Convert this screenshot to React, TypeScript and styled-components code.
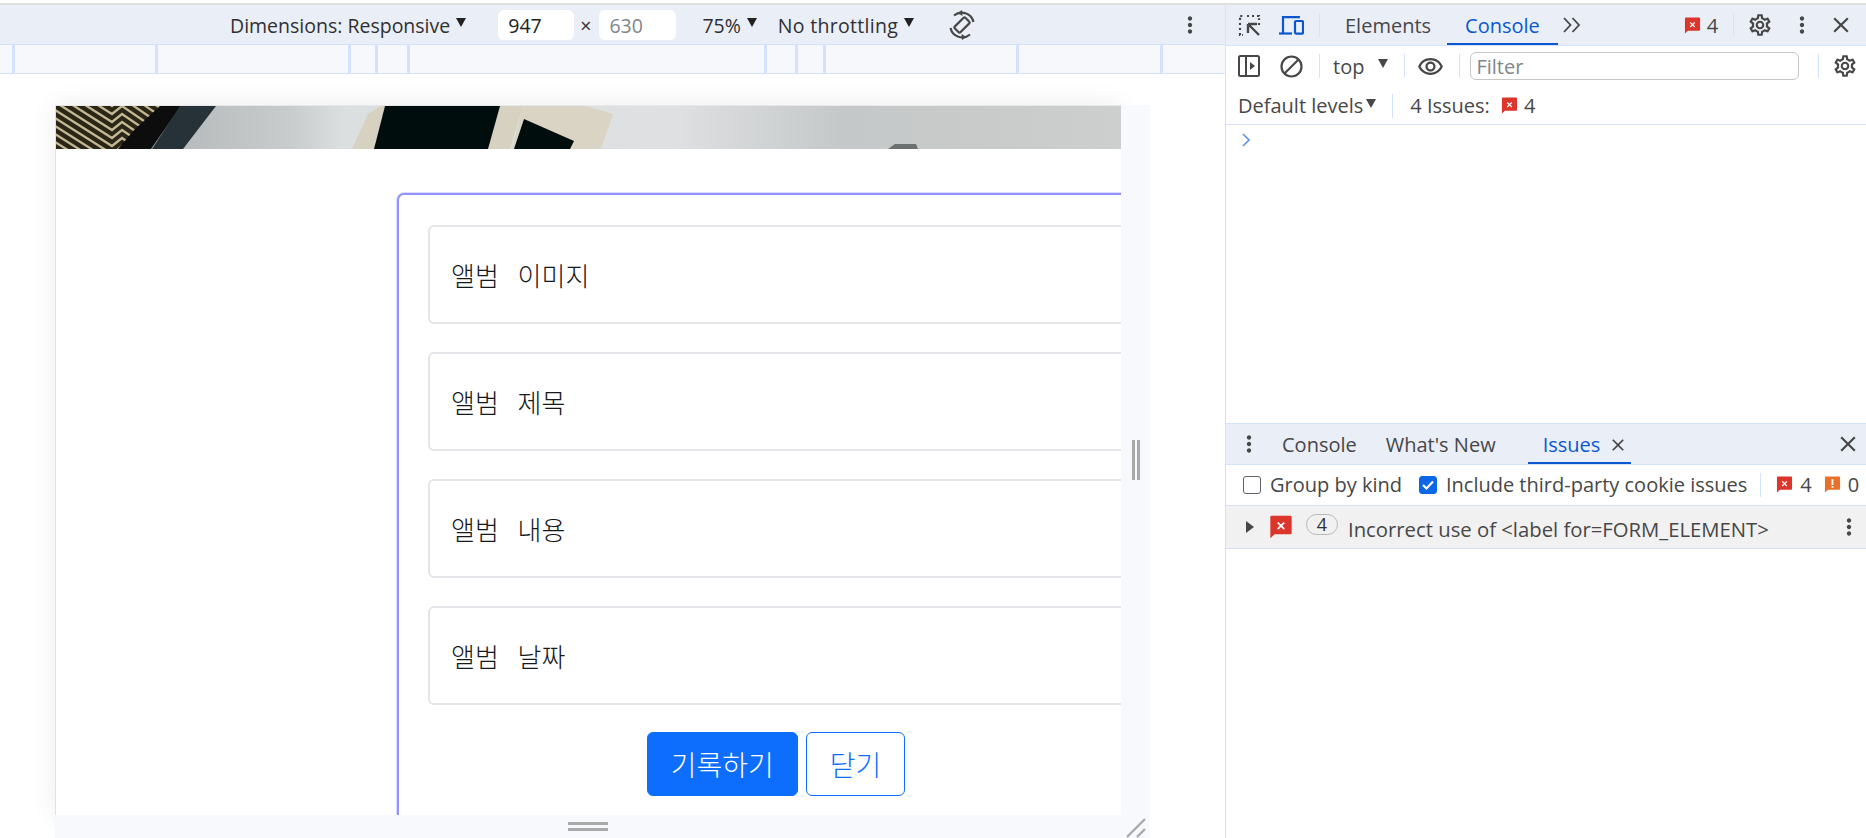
import React from "react";
import styled, { createGlobalStyle } from "styled-components";
import { MdClose, MdMoreVert, MdOutlineRemoveRedEye, MdOutlineSettings } from "react-icons/md";

const Global = createGlobalStyle`
  html, body { margin: 0; padding: 0; width: 1866px; height: 838px; overflow: hidden; background: #fff; }
  body { font-family: "Open Sans", "Noto Sans", sans-serif; color: #474747; }
  * { box-sizing: border-box; }
`;

const Shell = styled.div`width: 1866px; height: 838px; display: flex; flex-direction: column;`;
const TopEdge = styled.div`height: 5px; flex: none; border-bottom: 2px solid #dfdfdf;`;
const Main = styled.div`flex: 1; display: flex; min-height: 0;`;

const Emulator = styled.div`width: 1225px; flex: none; display: flex; flex-direction: column;`;
const DeviceBar = styled.div`height: 40px; flex: none; background: #eaeef7; border-bottom: 1px solid #d3e3fd; display: flex; align-items: center; padding-top: 1px; font-size: 19.5px; color: #303030;`;
const BarText = styled.span<{ $ml: number; $size?: number; $track?: number; $drop?: number }>`
  margin-left: ${p => p.$ml}px; white-space: nowrap; letter-spacing: ${p => p.$track ?? 0}px; margin-top: ${p => p.$drop ?? 0}px;
  ${p => (p.$size ? `font-size: ${p.$size}px;` : "")}
`;
const Caret = styled.i<{ $ml?: number; $color?: string }>`
  flex: none; width: 0; height: 0; margin-left: ${p => p.$ml ?? 6}px; margin-top: -5px;
  border-left: 5.5px solid transparent; border-right: 5.5px solid transparent;
  border-top: 9px solid ${p => p.$color ?? "#222"};
`;
const SizeBox = styled.span<{ $ml: number; $muted?: boolean; $w: number }>`
  flex: none; margin-left: ${p => p.$ml}px; width: ${p => p.$w}px; height: 30px; border-radius: 6px; background: #fff;
  display: flex; align-items: center; padding-left: 10px; color: ${p => (p.$muted ? "#80868b" : "#202124")};
`;
const IconSlot = styled.span<{ $ml?: number; $size?: number; $color?: string }>`
  flex: none; display: inline-flex; margin-left: ${p => p.$ml ?? 0}px; color: ${p => p.$color ?? "#474747"};
  font-size: ${p => p.$size ?? 24}px; line-height: 0;
`;

const Ruler = styled.div`height: 29px; flex: none; background: #f6f8fc; border-bottom: 1px solid #d3e3fd; display: flex;`;
const RulerMark = styled.div<{ $w: number }>`width: ${p => p.$w}px; flex: none; height: 28px; border-right: 3px solid #d3e3fd;`;

const Viewport = styled.div`flex: 1; min-height: 0; padding: 31px 0 0 55px; background: #fff; overflow: hidden;`;
const Frame = styled.div`display: grid; grid-template-columns: 1066px 29px; grid-template-rows: 710px 23px; width: 1095px;`;
const Page = styled.div`
  background: #fff; overflow: hidden; border-left: 1px solid #e2e2e2; border-top: 1px solid #e8e8e8;
  box-shadow: 0 0 24px rgba(0, 0, 0, 0.08);
`;
const Banner = styled.svg`display: block; width: 1066px; height: 43px;`;
const Card = styled.div`
  width: 756px; height: 660px; margin: 44px 0 0 341px; padding: 30px 29px 0;
  border: 2px solid #9393ff; border-radius: 7px; background: #fff; display: flex; flex-direction: column; gap: 28px;
  box-shadow: 0 -1px 0 #dcdcff, -1px 0 0 #dcdcff;
`;
const Field = styled.div`
  height: 99px; border: 2px solid #e3e5e8; border-radius: 6px; display: flex; align-items: center; padding: 0 21px;
  margin-right: -10px; font-family: "Noto Sans CJK KR", sans-serif; font-size: 26px; font-weight: 300; word-spacing: 13px; color: #16191c; background: #fff; flex: none;
`;
const Actions = styled.div`display: flex; justify-content: center; gap: 8px; margin-top: -1px; padding-left: 2px;`;
const Action = styled.button<{ $solid?: boolean }>`
  height: 64px; padding: 0 23px; border-radius: 6px; border: 1px solid #0d6efd; font-family: "Noto Sans CJK KR", sans-serif; font-size: 28px; font-weight: 300;
  background: ${p => (p.$solid ? "#0d6efd" : "#fff")}; color: ${p => (p.$solid ? "#fff" : "#0d6efd")};
`;
const SideGutter = styled.div`background: #f8f9fd; display: flex; align-items: center; justify-content: center; gap: 2px;`;
const VBar = styled.span`width: 3px; height: 40px; background: #a9a9a9;`;
const BottomGutter = styled.div`background: #f8f9fd; display: flex; flex-direction: column; align-items: center; justify-content: center; gap: 3px;`;
const HBar = styled.span`width: 40px; height: 3px; background: #a9a9a9;`;
const CornerGutter = styled.div`background: #f8f9fd; display: flex; align-items: flex-end; justify-content: flex-end; padding: 0 4px 0 0;`;

const Tools = styled.div`flex: 1; min-width: 0; border-left: 1px solid #d3e3fd; display: flex; flex-direction: column; font-size: 20px; color: #474747;`;
const TabBar = styled.div`height: 41px; flex: none; background: #eaeef7; border-bottom: 1px solid #d3e3fd; display: flex; align-items: center;`;
const Tab = styled.span<{ $ml: number; $on?: boolean; $pad?: number; $padR?: number }>`
  margin-left: ${p => p.$ml}px; white-space: nowrap; height: 100%; display: flex; align-items: center;
  padding: 1px ${p => p.$padR ?? p.$pad ?? 0}px 0 ${p => p.$pad ?? 0}px;
  color: ${p => (p.$on ? "#0b57d0" : "#474747")}; box-shadow: ${p => (p.$on ? "inset 0 -2px 0 #0b57d0" : "none")};
`;
const Sep = styled.span<{ $ml: number; $h?: number }>`flex: none; width: 1px; height: ${p => p.$h ?? 24}px; margin-left: ${p => p.$ml}px; background: #d3e3fd;`;
const ToolRow = styled.div<{ $h: number; $line?: boolean; $lift?: number }>`
  height: ${p => p.$h}px; flex: none; display: flex; align-items: center; padding-bottom: ${p => p.$lift ?? 0}px;
  ${p => (p.$line ? "border-bottom: 1px solid #d3e3fd;" : "")}
`;
const Filter = styled.span`
  flex: none; margin-left: 10px; width: 329px; height: 28px; border: 1px solid #c4c7c5; border-radius: 6px;
  display: flex; align-items: center; padding-left: 5px; color: #80868b;
`;
const Prompt = styled.div`height: 299px; flex: none; padding: 7px 0 0 15px; border-bottom: 1px solid #d3e3fd; line-height: 0;`;
const Issue = styled.div`height: 44px; flex: none; display: flex; align-items: center; background: #f1f1f1; border-top: 1px solid #d3e3fd; border-bottom: 1px solid #d3e3fd;`;
const CountBadge = styled.span`
  flex: none; margin-left: 13px; width: 32px; height: 21px; border: 1px solid #b8b8b8; border-radius: 11px; margin-top: -6px;
  display: flex; align-items: center; justify-content: center; font-size: 18px; color: #333;
`;
const Box = styled.span<{ $ml: number; $on?: boolean }>`
  flex: none; width: 18px; height: 18px; margin-left: ${p => p.$ml}px; border-radius: 3px; border: 1px solid #5f6368; display: flex; align-items: center; justify-content: center;
  ${p => (p.$on ? "background: #0b67e6; border-color: #0b67e6;" : "background: #fff;")}
`;
const RightArrow = styled.i<{ $ml: number }>`
  flex: none; width: 0; height: 0; margin-left: ${p => p.$ml}px;
  border-top: 6px solid transparent; border-bottom: 6px solid transparent; border-left: 8px solid #474747;
`;

function Flag({ w = 17, warn = false, ml = 0 }: { w?: number; warn?: boolean; ml?: number }) {
  const fill = warn ? "#e8702a" : "#dc352b";
  return (
    <IconSlot $ml={ml}>
      <svg width={w} height={w} viewBox="0 0 18 18">
        <path d="M1 1.5a1 1 0 0 1 1-1h14a1 1 0 0 1 1 1v12a1 1 0 0 1-1 1H4.2L1 17.5z" fill={fill} />
        {warn ? (
          <path d="M8 3.5h2v6H8zM8 10.5h2v2H8z" fill="#fff" />
        ) : (
          <path d="M7 5.2l2 2 2-2 .9.9-2 2 2 2-.9.9-2-2-2 2-.9-.9 2-2-2-2z" fill="#fff" />
        )}
      </svg>
    </IconSlot>
  );
}

function Rotate() {
  return (
    <svg width="26" height="30" viewBox="0 0 26 30" fill="none" stroke="#474747" strokeWidth="2.2">
      <rect x="9" y="7.5" width="8" height="15" rx="1.2" transform="rotate(45 13 15)" />
      <path d="M5 5.5A12 12 0 0 1 24.5 12" />
      <path d="M1.5 18A12 12 0 0 0 21 24.5" />
      <path d="M13 0l-4.5 3L13.5 6zM13 30l4.5-3L12.5 24z" fill="#474747" strokeWidth="0" />
    </svg>
  );
}
function Inspect() {
  return (
    <svg width="23" height="23" viewBox="0 0 23 23" fill="none" stroke="#474747">
      <path d="M2 6V2h4M9 2h2M14 2h2M19 2h2v4M21 9v2M2 9v2M2 14v2M2 19v2h3" strokeWidth="2.2" strokeDasharray="2.2 2" />
      <path d="M10 10v9M10 10h9M10 10l11 11" strokeWidth="2.4" />
    </svg>
  );
}
function Device() {
  return (
    <svg width="25" height="22" viewBox="0 0 25 22" fill="none" stroke="#0b57d0" strokeWidth="2.2">
      <path d="M4 19V3.2h17" />
      <path d="M0 19.5h13" />
      <rect x="16" y="7" width="8" height="12.6" rx="1" />
    </svg>
  );
}
function Sidebar() {
  return (
    <svg width="22" height="22" viewBox="0 0 22 22" fill="none" stroke="#474747" strokeWidth="2">
      <rect x="1" y="1" width="20" height="20" rx="1.5" />
      <path d="M8 1v20" />
      <path d="M12 7l5 4-5 4z" fill="#474747" strokeWidth="0" />
    </svg>
  );
}
function Block() {
  return (
    <svg width="23" height="23" viewBox="0 0 23 23" fill="none" stroke="#474747" strokeWidth="2.2">
      <circle cx="11.5" cy="11.5" r="10" />
      <path d="M4.5 18.5l14-14" />
    </svg>
  );
}
function ChevronPrompt() {
  return (
    <svg width="10" height="16" viewBox="0 0 10 16" fill="none" stroke="#5b8def" strokeWidth="1.6">
      <path d="M2 2l6 6-6 6" />
    </svg>
  );
}
function DoubleChevron() {
  return (
    <svg width="18" height="16" viewBox="0 0 18 16" fill="none" stroke="#474747" strokeWidth="1.8">
      <path d="M1 1l6.5 7L1 15M9.5 1L16 8l-6.5 7" />
    </svg>
  );
}
function Corner() {
  return (
    <svg width="20" height="20" viewBox="0 0 20 20" fill="none" stroke="#a9a9a9" strokeWidth="2.4">
      <path d="M1 19L19 1M11 19l8-8" />
    </svg>
  );
}

function Photo() {
  const stripes = Array.from({ length: 16 }, (_, i) => i * 8 - 70);
  return (
    <Banner viewBox="0 0 1066 43" preserveAspectRatio="none">
      <defs>
        <linearGradient id="wall" x1="0" x2="1" y1="0" y2="0">
          <stop offset="0.1" stopColor="#b4b8b9" />
          <stop offset="0.22" stopColor="#c9cccd" />
          <stop offset="0.27" stopColor="#dcdfe0" />
          <stop offset="0.58" stopColor="#dee0e1" />
          <stop offset="0.74" stopColor="#c5c8c8" />
          <stop offset="1" stopColor="#cdcece" />
        </linearGradient>
        <filter id="soft" x="-5%" y="-5%" width="110%" height="110%">
          <feGaussianBlur stdDeviation="0.7" />
        </filter>
        <clipPath id="folds">
          <polygon points="0,0 104,0 78,24 62,43 0,43" />
        </clipPath>
      </defs>
      <rect width="1066" height="43" fill="url(#wall)" />
      <g filter="url(#soft)">
        <polygon points="0,0 125,0 95,43 0,43" fill="#0a1011" />
        <g clipPath="url(#folds)">
          <rect width="120" height="43" fill="#2a2618" />
          {stripes.map(y => (
            <path key={y} d={`M-4 ${y}L56 ${y + 38}L66 ${y + 30}L110 ${y + 60}`} fill="none" stroke="#c4b894" strokeWidth="2.3" />
          ))}
        </g>
        <polygon points="124,0 160,0 127,43 96,43" fill="#283238" />
        <polygon points="312,8 325,0 467,0 454,43 296,43" fill="#d6d1c0" />
        <polygon points="329,0 444,0 432,43 318,43" fill="#050c10" />
        <polygon points="467,0 530,0 557,8 545,43 456,43" fill="#d9d4c4" />
        <polygon points="468,13 518,35 514,43 458,43" fill="#050b10" />
        <polygon points="839,38 860,38 862,43 832,43" fill="#6c6f70" />
      </g>
    </Banner>
  );
}

export default function App() {
  const marks = [15, 143, 193, 27, 32, 357, 31, 28, 193, 144];
  return (
    <Shell>
      <Global />
      <TopEdge />
      <Main>
        <Emulator>
          <DeviceBar>
            <BarText $ml={230}>Dimensions: Responsive</BarText>
            <Caret />
            <SizeBox $ml={32} $w={76}>947</SizeBox>
            <BarText $ml={6}>×</BarText>
            <SizeBox $ml={8} $muted $w={77}>630</SizeBox>
            <BarText $ml={26}>75%</BarText>
            <Caret />
            <BarText $ml={21} $track={0.3}>No throttling</BarText>
            <Caret />
            <IconSlot $ml={35}><Rotate /></IconSlot>
            <IconSlot $ml={202} $size={26}><MdMoreVert /></IconSlot>
          </DeviceBar>
          <Ruler>{marks.map((w, i) => <RulerMark key={i} $w={w} />)}</Ruler>
          <Viewport>
            <Frame>
              <Page>
                <Photo />
                <Card>
                  <Field>앨범 이미지</Field>
                  <Field>앨범 제목</Field>
                  <Field>앨범 내용</Field>
                  <Field>앨범 날짜</Field>
                  <Actions>
                    <Action $solid>기록하기</Action>
                    <Action>닫기</Action>
                  </Actions>
                </Card>
              </Page>
              <SideGutter><VBar /><VBar /></SideGutter>
              <BottomGutter><HBar /><HBar /></BottomGutter>
              <CornerGutter><Corner /></CornerGutter>
            </Frame>
          </Viewport>
        </Emulator>
        <Tools>
          <TabBar>
            <IconSlot $ml={12}><Inspect /></IconSlot>
            <IconSlot $ml={18}><Device /></IconSlot>
            <Sep $ml={15} />
            <Tab $ml={25}>Elements</Tab>
            <Tab $ml={16} $on $pad={18}>Console</Tab>
            <IconSlot $ml={5}><DoubleChevron /></IconSlot>
            <Flag ml={103} />
            <BarText $ml={6}>4</BarText>
            <Sep $ml={15} />
            <IconSlot $ml={13} $size={26}><MdOutlineSettings /></IconSlot>
            <IconSlot $ml={16} $size={26}><MdMoreVert /></IconSlot>
            <IconSlot $ml={13} $size={26}><MdClose /></IconSlot>
          </TabBar>
          <ToolRow $h={42} $lift={2}>
            <IconSlot $ml={12}><Sidebar /></IconSlot>
            <IconSlot $ml={20}><Block /></IconSlot>
            <Sep $ml={16} />
            <BarText $ml={13}>top</BarText>
            <Caret $ml={14} $color="#474747" />
            <Sep $ml={16} />
            <IconSlot $ml={12} $size={27}><MdOutlineRemoveRedEye /></IconSlot>
            <Sep $ml={15} />
            <Filter>Filter</Filter>
            <Sep $ml={19} />
            <IconSlot $ml={13} $size={26}><MdOutlineSettings /></IconSlot>
          </ToolRow>
          <ToolRow $h={37} $line $lift={1}>
            <BarText $ml={12}>Default levels</BarText>
            <Caret $ml={3} $color="#474747" />
            <Sep $ml={16} />
            <BarText $ml={17}>4 Issues:</BarText>
            <Flag ml={11} />
            <BarText $ml={6}>4</BarText>
          </ToolRow>
          <Prompt><ChevronPrompt /></Prompt>
          <TabBar>
            <IconSlot $ml={10} $size={26}><MdMoreVert /></IconSlot>
            <Tab $ml={20}>Console</Tab>
            <Tab $ml={29}>What's New</Tab>
            <Tab $ml={32} $on $pad={15} $padR={3}>Issues<IconSlot $ml={8} $size={20}><MdClose /></IconSlot></Tab>
            <IconSlot $ml={204} $size={26}><MdClose /></IconSlot>
          </TabBar>
          <ToolRow $h={40} $lift={1}>
            <Box $ml={17} />
            <BarText $ml={9}>Group by kind</BarText>
            <Box $ml={17} $on>
              <svg width="14" height="14" viewBox="0 0 14 14" fill="none" stroke="#fff" strokeWidth="2.2"><path d="M2 7l3.5 3.5L12 3.5" /></svg>
            </Box>
            <BarText $ml={9}>Include third-party cookie issues</BarText>
            <Sep $ml={13} />
            <Flag ml={15} />
            <BarText $ml={7}>4</BarText>
            <Flag ml={12} warn />
            <BarText $ml={7}>0</BarText>
          </ToolRow>
          <Issue>
            <RightArrow $ml={20} />
            <Flag ml={15} w={24} />
            <CountBadge>4</CountBadge>
            <BarText $ml={10} $size={20.3} $drop={3}>Incorrect use of &lt;label for=FORM_ELEMENT&gt;</BarText>
            <IconSlot $ml={67} $size={26}><MdMoreVert /></IconSlot>
          </Issue>
        </Tools>
      </Main>
    </Shell>
  );
}
